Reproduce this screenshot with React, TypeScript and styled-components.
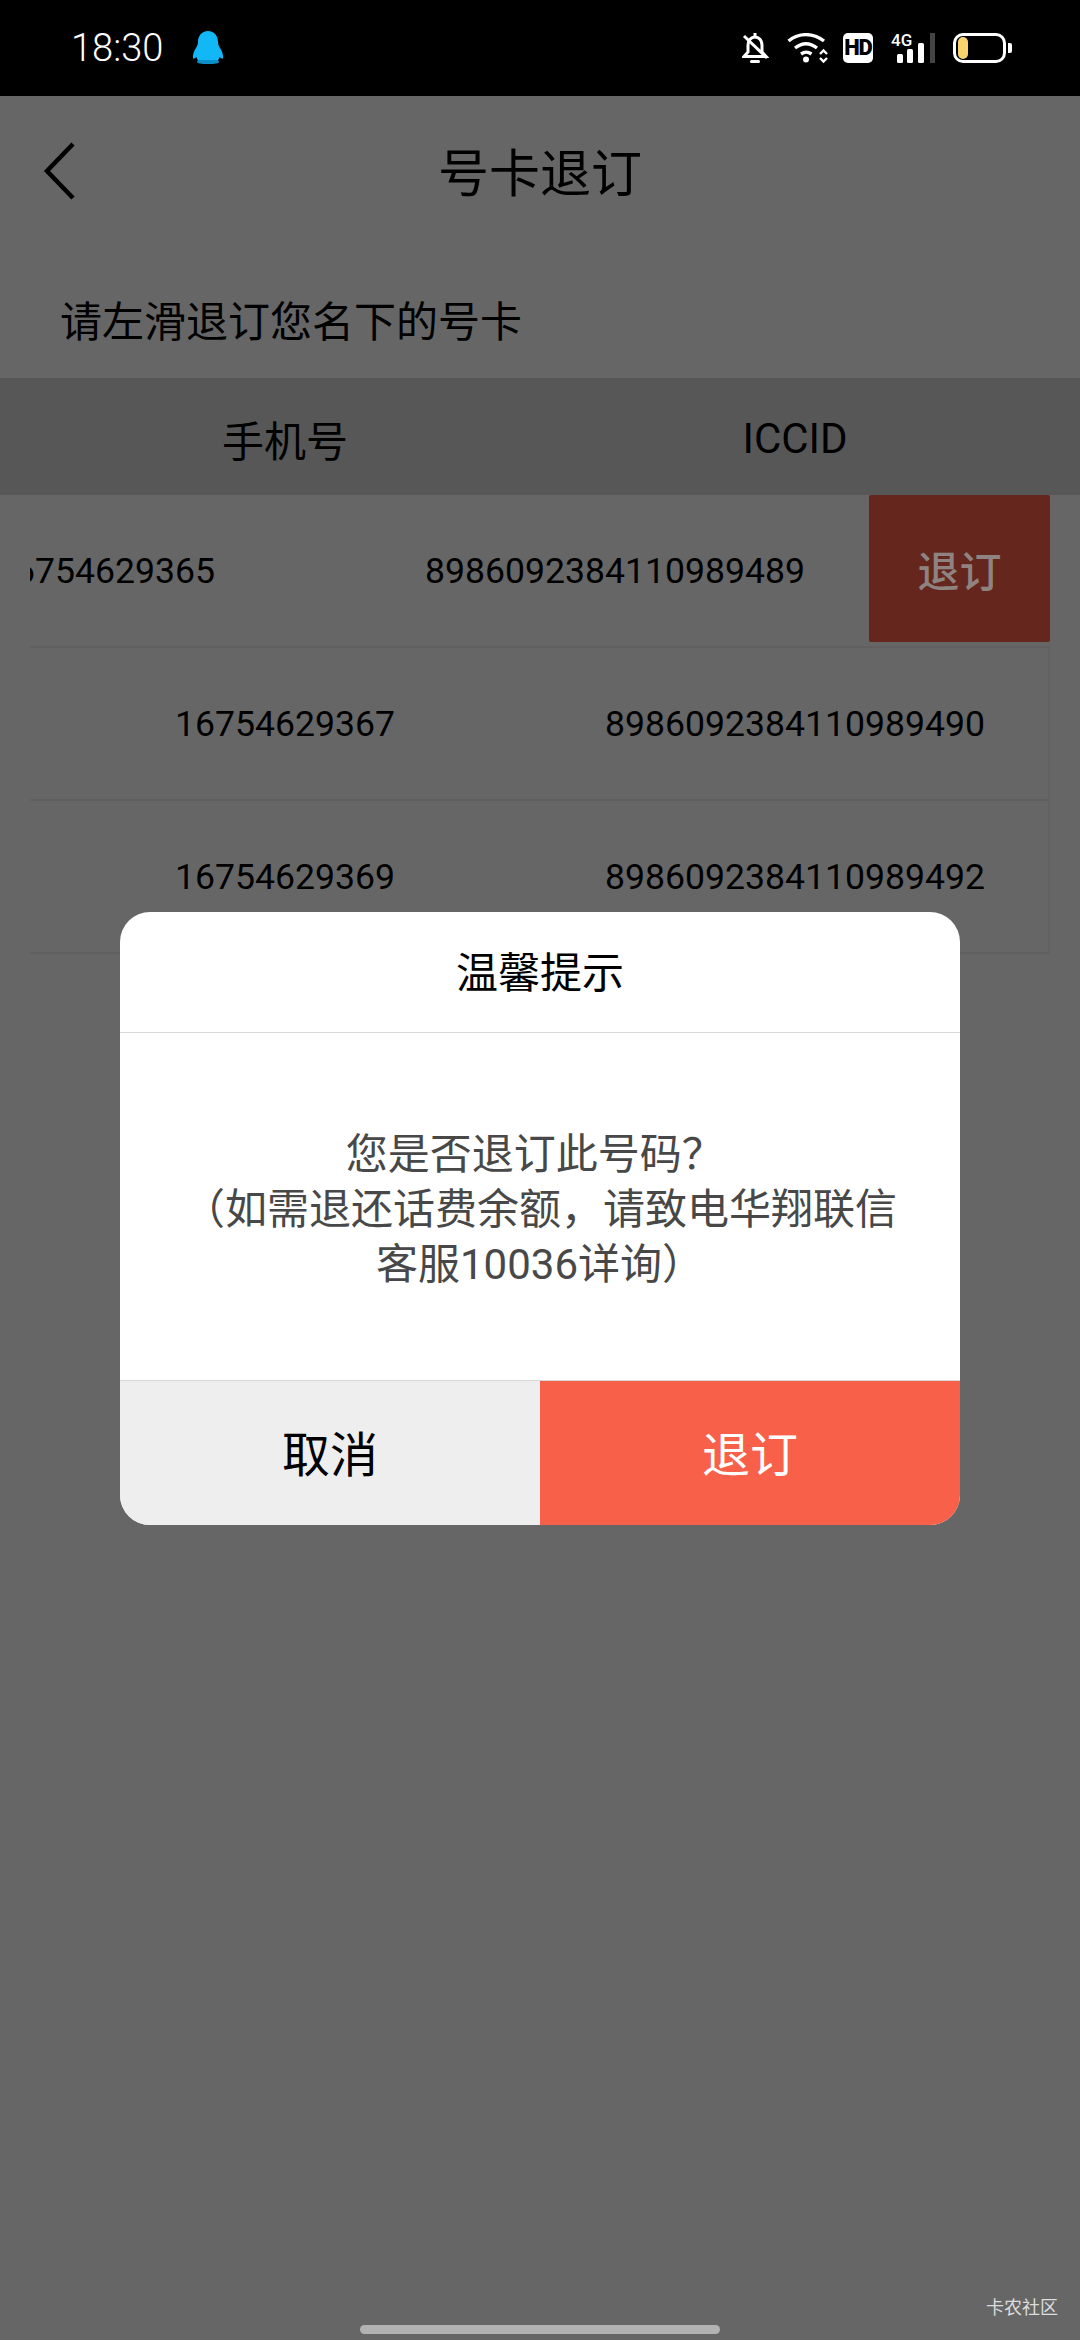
import styled, { createGlobalStyle } from 'styled-components'

const rows = [
  { phone: '16754629365', iccid: '8986092384110989489', swiped: true },
  { phone: '16754629367', iccid: '8986092384110989490', swiped: false },
  { phone: '16754629369', iccid: '8986092384110989492', swiped: false },
]

const BellOffIcon = () => (
  <svg width="27" height="31" viewBox="0 0 27 31" fill="none" stroke="#fff" strokeWidth="3">
    <path d="M6 19V12C6 7.500 9 4 13 4s7 3.500 7 8v7l4 4.500H2z" />
    <path d="M13 0v4" />
    <path d="M2 3l23 22" />
    <path d="M9.500 28.500h7" strokeLinecap="round" />
  </svg>
)

const WifiIcon = () => (
  <svg width="44" height="31" viewBox="0 0 44 31" fill="none">
    <path d="M1.500 8C12-.5 26-.5 37 8M8 15c7-5.500 15-5.500 22 0M14 21c3.500-2.500 7-2.500 10.500 0" stroke="#fff" strokeWidth="3.400" />
    <circle cx="19" cy="26.500" r="3" fill="#fff" />
    <path d="M33 21l3.500-3.500L40 21M33 25l3.500 3.500L40 25" stroke="#fff" strokeWidth="2.400" />
  </svg>
)

const SignalIcon = () => (
  <svg width="44" height="31" viewBox="0 0 44 31">
    <rect x="6" y="21" width="6" height="9" rx="1.500" fill="#fff" />
    <rect x="16" y="16" width="6" height="14" rx="1.500" fill="#fff" />
    <rect x="27" y="10" width="6" height="20" rx="1.500" fill="#fff" />
    <rect x="39" y="0" width="5" height="30" fill="#444" />
  </svg>
)

const PenguinIcon = () => (
  <svg width="34" height="36" viewBox="0 0 34 36">
    <path
      d="M17 1c6.500 0 10 5 10 11 0 2 .500 3.500 2 6 2 3 3.500 6.500 3 10.500-1.500 0-2.500-.500-3.500-1.500-.500 2-1.500 3.500-2.500 4.500l-18 0C7 30.500 6 29 5.500 27c-1 1-2 1.500-3.500 1.500C1.500 24.500 3 21 5 18c1.500-2.500 2-4 2-6C7 6 10.500 1 17 1z"
      fill="#12b7f5"
    />
    <path d="M6 31.500c0-1 2-1.500 4-1.500h14c2 0 4 .500 4 1.500 0 2-4 2.500-11 2.500s-11-.500-11-2.500z" fill="#0b8fc4" />
  </svg>
)

const BackIcon = () => (
  <svg width="36" height="60" viewBox="0 0 36 60" fill="none" stroke="#000" strokeWidth="4.500">
    <path d="M32 3L6 30l26 27" />
  </svg>
)

export default function App() {
  return (
    <Page>
      <GlobalStyle />
      <StatusBar>
        <Clock>18:30</Clock>
        <PenguinSlot>
          <PenguinIcon />
        </PenguinSlot>
        <StatusIcons>
          <BellOffIcon />
          <WifiIcon />
          <HdBadge>HD</HdBadge>
          <SignalWrap>
            <NetworkLabel>4G</NetworkLabel>
            <SignalIcon />
          </SignalWrap>
          <Battery>
            <BatteryLevel />
          </Battery>
        </StatusIcons>
      </StatusBar>

      <Screen>
        <NavBar>
          <BackSlot>
            <BackIcon />
          </BackSlot>
          <NavTitle>号卡退订</NavTitle>
        </NavBar>
        <Hint>请左滑退订您名下的号卡</Hint>
        <TableHead>
          <HeadCell>手机号</HeadCell>
          <HeadCell>ICCID</HeadCell>
        </TableHead>
        <TableBody>
          {rows.map((row) => (
            <Row key={row.phone} $swiped={row.swiped}>
              <RowContent $swiped={row.swiped}>
                <Cell>{row.phone}</Cell>
                <Cell>{row.iccid}</Cell>
              </RowContent>
              {row.swiped && <SwipeAction>退订</SwipeAction>}
            </Row>
          ))}
        </TableBody>

        <Overlay>
          <Dialog>
            <DialogTitle>温馨提示</DialogTitle>
            <DialogBody>
              您是否退订此号码？{'\u00a0'}
              <br />
              （如需退还话费余额，请致电华翔联信
              <br />
              客服10036详询）
            </DialogBody>
            <DialogActions>
              <CancelButton>取消</CancelButton>
              <ConfirmButton>退订</ConfirmButton>
            </DialogActions>
          </Dialog>
          <HomeBar />
          <Watermark>卡农社区</Watermark>
        </Overlay>
      </Screen>
    </Page>
  )
}

const GlobalStyle = createGlobalStyle`
  html, body {
    margin: 0;
    background: #000;
  }
  * {
    box-sizing: border-box;
  }
`

const Page = styled.div`
  width: 1080px;
  height: 2340px;
  display: flex;
  flex-direction: column;
  overflow: hidden;
  font-family: Roboto, 'Noto Sans CJK SC', sans-serif;
  color: #000;
`

const StatusBar = styled.div`
  height: 96px;
  flex: none;
  display: flex;
  align-items: center;
  padding: 0 74px 0 71px;
  background: #000;
  color: #fff;
`

const Clock = styled.div`
  font-size: 38px;
  font-weight: 300;
`

const PenguinSlot = styled.div`
  display: flex;
  margin-left: 28px;
`

const StatusIcons = styled.div`
  margin-left: auto;
  display: flex;
  align-items: center;
  gap: 18px;
`

const HdBadge = styled.div`
  width: 30px;
  height: 30px;
  margin-left: -6px;
  border-radius: 5px;
  background: #fff;
  color: #000;
  font-size: 22px;
  font-weight: 900;
  letter-spacing: -1px;
  line-height: 30px;
  text-align: center;
`

const SignalWrap = styled.div`
  position: relative;
  width: 44px;
  height: 31px;
  display: flex;
`

const NetworkLabel = styled.span`
  position: absolute;
  left: 0;
  top: -1px;
  font-size: 17px;
  font-weight: 500;
  line-height: 16px;
`

const Battery = styled.div`
  position: relative;
  width: 53px;
  height: 30px;
  border: 3px solid #fff;
  border-radius: 10px;
  padding: 1px 2px;

  &::after {
    content: '';
    position: absolute;
    right: -9px;
    top: 7px;
    width: 4px;
    height: 10px;
    background: #fff;
    border-radius: 0 2px 2px 0;
  }
`

const BatteryLevel = styled.div`
  width: 10px;
  height: 100%;
  border-radius: 5px;
  background: #f8d36e;
`

const Screen = styled.div`
  position: relative;
  flex: 1;
  background: #fff;
`

const NavBar = styled.div`
  position: relative;
  height: 154px;
  padding-bottom: 6px;
  display: flex;
  align-items: center;
  justify-content: center;
`

const BackSlot = styled.div`
  position: absolute;
  left: 41px;
  top: 45px;
  display: flex;
`

const NavTitle = styled.div`
  font-size: 51px;
`

const Hint = styled.div`
  height: 128px;
  padding: 45px 0 0 60px;
  font-size: 42px;
  line-height: 56px;
`

const TableHead = styled.div`
  height: 117px;
  padding: 3px 30px 0;
  display: grid;
  grid-template-columns: 510px 510px;
  align-items: center;
  background: #d9d9d9;
`

const HeadCell = styled.div`
  text-align: center;
  font-size: 42px;
`

const TableBody = styled.div`
  padding: 0 30px;
`

const Row = styled.div<{ $swiped: boolean }>`
  position: relative;
  height: 153px;
  overflow: hidden;
  border-bottom: 2px solid #efefef;
  border-right: ${({ $swiped }) => ($swiped ? 'none' : '2px solid #f5f5f5')};
`

const RowContent = styled.div<{ $swiped: boolean }>`
  display: flex;
  height: 100%;
  margin-left: ${({ $swiped }) => ($swiped ? '-180px' : '0')};
`

const Cell = styled.div`
  flex: none;
  width: 510px;
  display: flex;
  align-items: center;
  justify-content: center;
  font-size: 35.6px;
`

// painted over the scrim, so the dimmed colours are set directly
const SwipeAction = styled.div`
  position: absolute;
  z-index: 1;
  top: 0;
  right: 0;
  width: 181px;
  height: 147px;
  display: flex;
  align-items: center;
  justify-content: center;
  border-radius: 2px;
  background: #64261d;
  color: #8f8381;
  font-size: 42px;
  font-weight: 500;
`

const Overlay = styled.div`
  position: absolute;
  inset: 0;
  display: flex;
  align-items: center;
  justify-content: center;
  background: rgba(0, 0, 0, 0.6);
`

const Dialog = styled.div`
  width: 840px;
  height: 613px;
  display: flex;
  flex-direction: column;
  overflow: hidden;
  border-radius: 30px;
  background: #fff;
`

const DialogTitle = styled.div`
  height: 121px;
  flex: none;
  padding-bottom: 5px;
  display: flex;
  align-items: center;
  justify-content: center;
  border-bottom: 1px solid #d8d8d8;
  font-size: 42px;
`

const DialogBody = styled.div`
  flex: 1;
  padding-top: 94px;
  text-align: center;
  color: #484848;
  font-size: 42px;
  line-height: 55px;
  border-bottom: 1px solid #d8d8d8;
`

const DialogActions = styled.div`
  height: 144px;
  flex: none;
  display: grid;
  grid-template-columns: 1fr 1fr;
`

const CancelButton = styled.div`
  padding-bottom: 4px;
  display: flex;
  align-items: center;
  justify-content: center;
  background: #eeeeee;
  font-size: 48px;
`

const ConfirmButton = styled(CancelButton)`
  background: #f96049;
  color: #fff;
`

const HomeBar = styled.div`
  position: absolute;
  left: 360px;
  bottom: 6px;
  width: 360px;
  height: 9px;
  border-radius: 5px;
  background: #b2b2b2;
`

const Watermark = styled.div`
  position: absolute;
  right: 22px;
  bottom: 21px;
  font-size: 18px;
  line-height: 22px;
  color: #ddd;
`
